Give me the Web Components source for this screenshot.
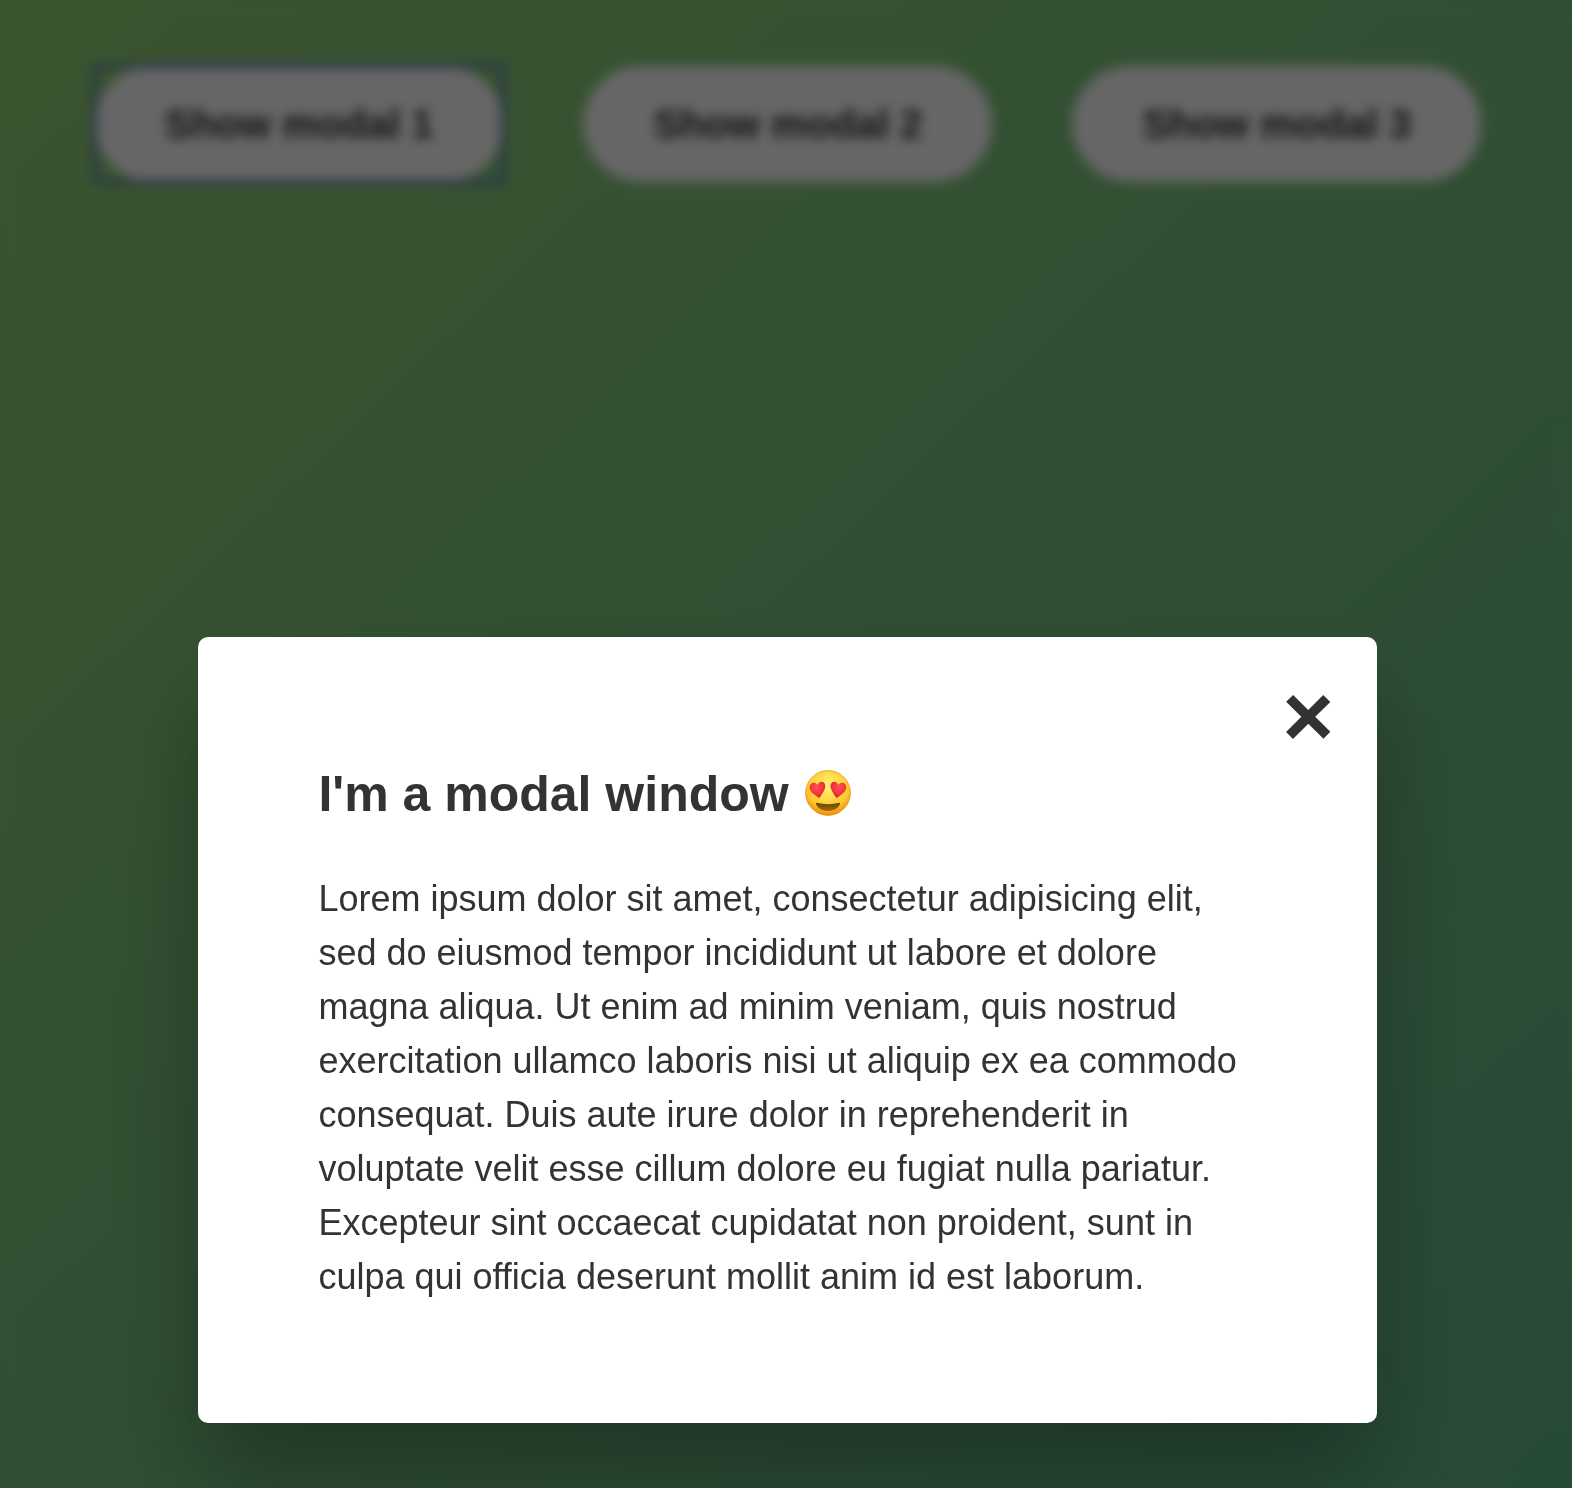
<!DOCTYPE html>
<html lang="en">
<head>
<meta charset="utf-8">
<title>Modal window</title>
<style>
  html, body { margin: 0; height: 100%; overflow: hidden; }
  body { font-family: "Liberation Sans", Helvetica, Arial, sans-serif; color: #333; line-height: 1.5; }
</style>
</head>
<body>
<modal-page>
  <show-button slot="actions" active>Show modal 1</show-button>
  <show-button slot="actions">Show modal 2</show-button>
  <show-button slot="actions">Show modal 3</show-button>
  <modal-window slot="dialog">
    <span slot="title">I'm a modal window</span>
    <heart-eyes slot="title"></heart-eyes>
    Lorem ipsum dolor sit amet, consectetur adipisicing elit,<br>
    sed do eiusmod tempor incididunt ut labore et dolore<br>
    magna aliqua. Ut enim ad minim veniam, quis nostrud<br>
    exercitation ullamco laboris nisi ut aliquip ex ea commodo<br>
    consequat. Duis aute irure dolor in reprehenderit in<br>
    voluptate velit esse cillum dolore eu fugiat nulla pariatur.<br>
    Excepteur sint occaecat cupidatat non proident, sunt in<br>
    culpa qui officia deserunt mollit anim id est laborum.
  </modal-window>
</modal-page>
<script>
function define(name, html) {
  const template = document.createElement('template');
  template.innerHTML = html;
  customElements.define(name, class extends HTMLElement {
    constructor() {
      super();
      this.attachShadow({ mode: 'open' }).append(template.content.cloneNode(true));
    }
  });
}

define('show-button', `
  <style>
    :host { display: block; }
    button {
      display: block; margin: 0; border: 0; border-radius: 200px; padding: 35px 70px;
      background: #fff; color: #333; font: 700 40px/46px "Liberation Sans", Helvetica, Arial, sans-serif;
      white-space: nowrap;
    }
    :host([active]) { outline: 4px solid #5a70c8; outline-offset: -2px; border-radius: 3px; }
  </style>
  <button type="button"><slot></slot></button>`);

define('heart-eyes', `
  <style>
    :host { display: inline-block; width: 46px; height: 46px; margin-bottom: 4px; }
    svg { display: block; width: 100%; height: 100%; }
  </style>
  <svg viewBox="0 0 46 46" role="img">
    <defs>
      <radialGradient id="face" cx="50%" cy="36%" r="64%">
        <stop offset="0" stop-color="#fff080"/><stop offset=".4" stop-color="#ffe04a"/>
        <stop offset=".75" stop-color="#fdc22c"/><stop offset="1" stop-color="#e98a10"/>
      </radialGradient>
      <radialGradient id="heart" cx="45%" cy="35%" r="65%">
        <stop offset="0" stop-color="#ff5354"/><stop offset=".65" stop-color="#f5313b"/>
        <stop offset="1" stop-color="#c92a20"/>
      </radialGradient>
      <linearGradient id="mouth" x2="0" y2="1">
        <stop offset="0" stop-color="#654006"/><stop offset="1" stop-color="#a96d08"/>
      </linearGradient>
    </defs>
    <circle cx="23" cy="23" r="22.4" fill="url(#face)" stroke="#e9950f" stroke-width=".8"/>
    <path id="h" d="M14.3 28C9.8 25.3 4.7 21.8 4.6 17.3C4.5 14.4 6.5 12.6 8.9 12.7C10.7 12.8 12 13.9 12.5 15.1C13.2 12.7 14.7 11.5 16.7 11.7C19.5 11.9 20.9 14.5 20 17.9C18.9 21.8 16.5 24.7 14.3 28Z" fill="url(#heart)"/>
    <use href="#h" transform="matrix(-1 0 0 1 45.8 0)"/>
    <path d="M11.6 32.8Q23 35.5 34.4 32.8Q35.5 32.7 35 34.1C33 38.8 28.7 41.1 23 41.1S13 38.8 11 34.1Q10.5 32.7 11.6 32.8Z" fill="url(#mouth)"/>
  </svg>`);

define('modal-window', `
  <style>
    :host {
      display: block; position: relative; box-sizing: border-box; width: 1178.5px; padding: 120px 120px 119px;
      background: #fff; border-radius: 10px; box-shadow: 0 60px 100px rgba(0,0,0,.3);
    }
    h1 { display: flex; align-items: center; gap: 16px; margin: 0 0 40px; font-size: 50px; line-height: 75px; }
    p { margin: 0; font-size: 36px; line-height: 54px; white-space: nowrap; }
    button {
      position: absolute; top: 21px; right: 43px; margin: 0; padding: 0; border: 0; background: none;
      font: 88px/115px "Liberation Sans", Helvetica, Arial, sans-serif; color: #333;
      -webkit-text-stroke: 3.6px #333;
    }
  </style>
  <button type="button">&times;</button>
  <h1><slot name="title"></slot></h1>
  <p><slot></slot></p>`);

define('modal-page', `
  <style>
    :host { display: block; height: 100vh; background: linear-gradient(to top left, #62b98a, #7bc580 50%, #93d278); }
    nav { display: flex; gap: 80px; padding: 66px 0 0 94.5px; }
    .overlay {
      position: fixed; inset: 0; box-sizing: border-box; padding: 637px 0 0 198.4px;
      background: rgba(0,0,0,.6);
    }
    .blur { position: fixed; inset: 0; backdrop-filter: blur(6px); }
  </style>
  <nav><slot name="actions"></slot></nav>
  <div class="blur"></div>
  <div class="overlay"><slot name="dialog"></slot></div>`);
</script>
</body>
</html>
